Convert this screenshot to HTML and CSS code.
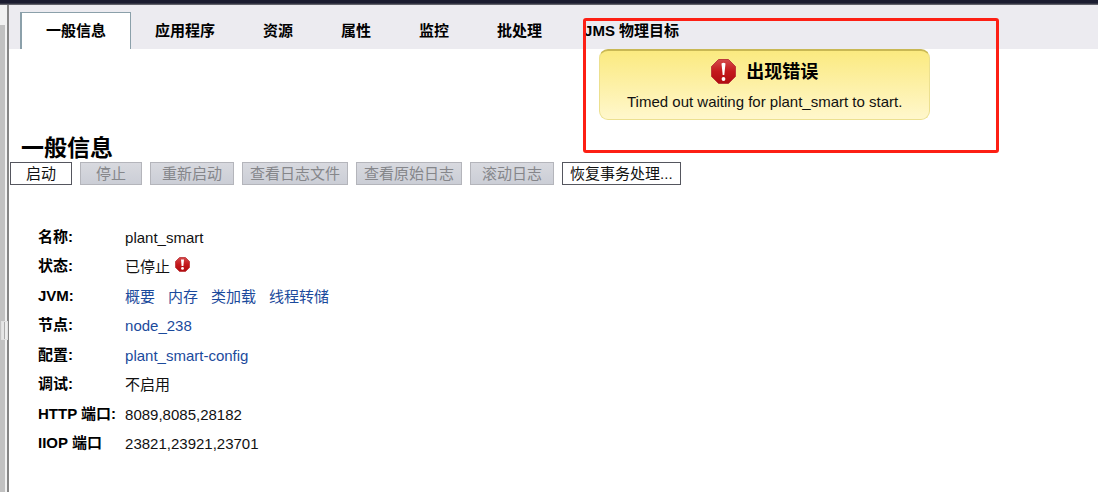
FILE: index.html
```html
<!DOCTYPE html>
<html lang="zh-CN">
<head>
<meta charset="utf-8">
<title>一般信息</title>
<link rel="stylesheet" href="styles.css">
</head>
<body>
<svg class="defs" aria-hidden="true">
  <defs>
    <linearGradient id="stop-red" x1="0" y1="0" x2="0" y2="1">
      <stop offset="0" stop-color="#d4484a"/>
      <stop offset="0.5" stop-color="#c4181c"/>
      <stop offset="1" stop-color="#b00c10"/>
    </linearGradient>
    <symbol id="error" viewBox="0 0 25 25">
      <path d="M7.5 0.5h10l7 7v10l-7 7h-10l-7-7v-10z" fill="url(#stop-red)" stroke="#bd3a3a"/>
      <path d="M10.5 4.5q2-1.6 4 0l-1.2 11.5h-1.6z" fill="#fff"/>
      <circle cx="12.5" cy="20" r="1.9" fill="#fff"/>
    </symbol>
    <symbol id="error-small" viewBox="0 0 15 15">
      <path d="M4.5 0.5h6l4 4v6l-4 4h-6l-4-4v-6z" fill="url(#stop-red)" stroke="#c2474a"/>
      <path d="M6 2.5h3l-.6 6.5h-1.8z" fill="#fff"/>
      <circle cx="7.5" cy="11.4" r="1.4" fill="#fff"/>
    </symbol>
  </defs>
</svg>
<div class="topbar"></div>
<div class="frame">
  <div class="splitter">
    <div class="scroll-head"></div>
    <div class="grip"></div>
  </div>
  <main class="content">
    <nav class="tabs">
      <a class="tab active" href="#">一般信息</a>
      <a class="tab" href="#">应用程序</a>
      <a class="tab" href="#">资源</a>
      <a class="tab" href="#">属性</a>
      <a class="tab" href="#">监控</a>
      <a class="tab" href="#">批处理</a>
      <a class="tab last" href="#">JMS 物理目标</a>
    </nav>
    <section class="notice" role="alert">
      <div class="notice-title">
        <svg class="icon-large" aria-hidden="true"><use href="#error"/></svg>
        <strong>出现错误</strong>
      </div>
      <p class="notice-text">Timed out waiting for plant_smart to start.</p>
    </section>
    <h1 class="title">一般信息</h1>
    <div class="actions">
      <button class="btn narrow" type="button">启动</button>
      <button class="btn narrow" type="button" disabled>停止</button>
      <button class="btn medium" type="button" disabled>重新启动</button>
      <button class="btn" type="button" disabled>查看日志文件</button>
      <button class="btn" type="button" disabled>查看原始日志</button>
      <button class="btn medium" type="button" disabled>滚动日志</button>
      <button class="btn" type="button">恢复事务处理...</button>
    </div>
    <dl class="props">
      <dt>名称:</dt><dd>plant_smart</dd>
      <dt>状态:</dt><dd class="status">已停止<svg class="icon-small" aria-hidden="true"><use href="#error-small"/></svg></dd>
      <dt>JVM:</dt><dd class="links"><a href="#">概要</a><a href="#">内存</a><a href="#">类加载</a><a href="#">线程转储</a></dd>
      <dt>节点:</dt><dd><a href="#">node_238</a></dd>
      <dt>配置:</dt><dd><a href="#">plant_smart-config</a></dd>
      <dt>调试:</dt><dd>不启用</dd>
      <dt>HTTP 端口:</dt><dd>8089,8085,28182</dd>
      <dt>IIOP 端口</dt><dd>23821,23921,23701</dd>
    </dl>
    <div class="highlight"></div>
  </main>
</div>
</body>
</html>
```
FILE: styles.css
```css
* {
  box-sizing: border-box;
}

body {
  margin: 0;
  min-height: 100vh;
  display: flex;
  flex-direction: column;
  background: #fff;
  color: #111;
  font: 15px/20px "Liberation Sans", "Noto Sans CJK SC", sans-serif;
}

a {
  color: #1b4a9c;
  text-decoration: none;
}

.defs {
  position: absolute;
  width: 0;
  height: 0;
}

.topbar {
  height: 5px;
  background: linear-gradient(#1b1c30 60%, #77777c);
}

.frame {
  flex: 1;
  display: flex;
}

.splitter {
  width: 9px;
  flex: none;
  display: flex;
  flex-direction: column;
  background: linear-gradient(to right, #c1c1c1 5px, #f2f2f2 5px, #f2f2f2 7px, #858585 7px);
}

.scroll-head {
  width: 7px;
  height: 20px;
  background: #f1f1f1;
}

.grip {
  width: 7px;
  height: 19px;
  margin: 296px 0 0 1px;
  border: 1px solid #e0e0e0;
  background: linear-gradient(to right, #e6e6e6 2px, #aaa 2px, #aaa 3px, #eee 3px);
}

.content {
  position: relative;
  flex: 1;
  min-width: 0;
}

.tabs {
  display: flex;
  height: 44px;
  padding: 7px 11px 0;
  background: #ecebf0;
}

.tab {
  padding: 9px 24px 0;
  color: #000;
  font-weight: bold;
  white-space: nowrap;
}

.tab.active {
  padding: 8px 24px 0;
  border: 1px solid #8ba0aa;
  border-bottom: 0;
  border-left-width: 2px;
  background: #fff;
}

.tab.last {
  padding-left: 18px;
}

.notice {
  width: max-content;
  height: 71px;
  margin-left: 590px;
  padding: 8px 27px 0;
  border: 1px solid #ece08f;
  border-top: 2px solid #c9b854;
  border-radius: 9px;
  background: linear-gradient(#fbea80, #fff7cc);
}

.notice-title {
  display: flex;
  align-items: center;
  justify-content: center;
  gap: 10px;
  height: 25px;
  color: #000;
  font-size: 18px;
}

.icon-large {
  width: 25px;
  height: 25px;
}

.notice-text {
  margin: 8px 0 0;
}

.title {
  margin: 14px 12px 0;
  color: #000;
  font-size: 23px;
  line-height: 28px;
}

.actions {
  display: flex;
  gap: 8px;
  padding-left: 1px;
}

.btn {
  height: 23px;
  padding: 0 7px;
  border: 1px solid #55565e;
  background: #fff;
  color: #111;
  font: inherit;
  white-space: nowrap;
}

.btn.narrow {
  padding: 0 15px;
}

.btn.medium {
  padding: 0 11px;
}

.btn:disabled {
  border-color: #b4b5bb;
  background: linear-gradient(#d8d9df, #cbced6);
  color: #85868a;
}

.props {
  display: grid;
  grid-template-columns: max-content 1fr;
  grid-auto-rows: 29px 30px;
  column-gap: 9px;
  margin: 42px 0 0 29px;
}

.props dt {
  color: #000;
  font-weight: bold;
}

.props dd {
  margin: 0;
  padding-top: 1px;
}

.status,
.links {
  display: flex;
}

.links {
  gap: 13px;
}

.icon-small {
  width: 15px;
  height: 15px;
  margin-left: 5px;
}

.highlight {
  position: absolute;
  top: 13px;
  left: 574px;
  width: 416px;
  height: 135px;
  border: 3px solid #fd1f14;
  border-radius: 3px;
}
```
